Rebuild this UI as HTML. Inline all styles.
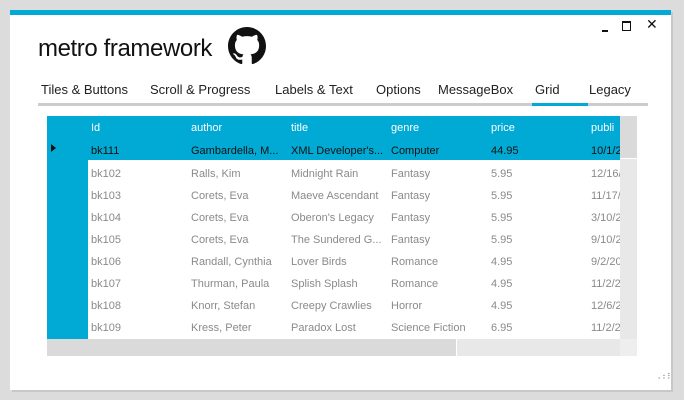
<!DOCTYPE html><html><head><style>
body{margin:0;width:684px;height:400px;background:#dcdcdc;font-family:"Liberation Sans",sans-serif;position:relative;overflow:hidden}
.win{position:absolute;left:10px;top:10px;width:661px;height:380px;background:#fff;box-shadow:2px 2px 0 #c8c8c8}
.top{position:absolute;left:0;top:0;width:661px;height:5px;background:#00aad4}
.a{position:absolute;white-space:nowrap}
.t{font-size:13px;color:#222;top:72px}
.grid{position:absolute;left:37px;top:106px;width:573px;height:223px;background:#00aad4}
.rows{position:absolute;left:41px;top:44px;width:532px;height:179px;background:#fff}
.c{position:absolute;font-size:11px;white-space:nowrap;overflow:hidden}
</style></head><body>
<div class="win">
<div class="top"></div>
<div class="a" style="left:28px;top:25px;font-size:24px;color:#111;letter-spacing:-0.4px">metro framework</div>
<svg class="a" style="left:218px;top:17px" width="38" height="38" viewBox="0 0 16 16"><path fill="#111" d="M8 0C3.58 0 0 3.58 0 8c0 3.54 2.29 6.53 5.47 7.59.4.07.55-.17.55-.38 0-.19-.01-.82-.01-1.49-2.01.37-2.53-.49-2.69-.94-.09-.23-.48-.94-.82-1.13-.28-.15-.68-.52-.01-.53.63-.01 1.08.58 1.23.82.72 1.21 1.87.87 2.33.66.07-.52.28-.87.51-1.07-1.78-.2-3.64-.89-3.64-3.95 0-.87.31-1.59.82-2.15-.08-.2-.36-1.02.08-2.12 0 0 .67-.21 2.2.82.64-.18 1.32-.27 2-.27.68 0 1.36.09 2 .27 1.53-1.04 2.2-.82 2.2-.82.44 1.1.16 1.92.08 2.12.51.56.82 1.27.82 2.15 0 3.07-1.87 3.75-3.65 3.95.29.25.54.73.54 1.48 0 1.07-.01 1.93-.01 2.2 0 .21.15.46.55.38A8.013 8.013 0 0 0 16 8c0-4.42-3.58-8-8-8z"/></svg>
<div class="a" style="left:592px;top:20px;width:6px;height:2px;background:#111"></div>
<div class="a" style="left:612px;top:11px;width:7px;height:7px;border:1.5px solid #111;border-top-width:2px"></div>
<div class="a" style="left:636px;top:6px;font-size:14px;color:#111">✕</div>
<div class="a t" style="left:31px">Tiles &amp; Buttons</div>
<div class="a t" style="left:140px">Scroll &amp; Progress</div>
<div class="a t" style="left:265px">Labels &amp; Text</div>
<div class="a t" style="left:366px">Options</div>
<div class="a t" style="left:428px">MessageBox</div>
<div class="a t" style="left:525px">Grid</div>
<div class="a t" style="left:579px">Legacy</div>
<div class="a" style="left:28px;top:93px;width:610px;height:3px;background:#ccc"></div>
<div class="a" style="left:522px;top:93px;width:56px;height:3px;background:#00aad4"></div>
<div class="grid">
<div class="rows"></div>
<div class="a" style="left:573px;top:0;width:17px;height:42px;background:#dadada"></div>
<div class="a" style="left:573px;top:43px;width:17px;height:180px;background:#e8e8e8"></div>
<div class="a" style="left:0;top:223px;width:409px;height:17px;background:#dadada"></div>
<div class="a" style="left:410px;top:223px;width:163px;height:17px;background:#e8e8e8"></div>
<div class="a" style="left:573px;top:223px;width:17px;height:17px;background:#eee"></div>
<div class="a" style="left:4px;top:28px;width:0;height:0;border-left:5px solid #111;border-top:4px solid transparent;border-bottom:4px solid transparent"></div>
<div id="cells"></div>
</div>
<div class="a" style="left:645px;top:362px;font-size:8px;color:#888;letter-spacing:-1px">⠠⠰⠸</div>
</div>
<script>
var d=[["Id","author","title","genre","price","publi"],["bk111","Gambardella, M...","XML Developer's...","Computer","44.95","10/1/2"],["bk102","Ralls, Kim","Midnight Rain","Fantasy","5.95","12/16/"],["bk103","Corets, Eva","Maeve Ascendant","Fantasy","5.95","11/17/"],["bk104","Corets, Eva","Oberon's Legacy","Fantasy","5.95","3/10/2"],["bk105","Corets, Eva","The Sundered G...","Fantasy","5.95","9/10/2"],["bk106","Randall, Cynthia","Lover Birds","Romance","4.95","9/2/20"],["bk107","Thurman, Paula","Splish Splash","Romance","4.95","11/2/2"],["bk108","Knorr, Stefan","Creepy Crawlies","Horror","4.95","12/6/2"],["bk109","Kress, Peter","Paradox Lost","Science Fiction","6.95","11/2/2"]];
var h="",xs=[44,144,244,344,444,544],ys=[6,29,52,74,96,118,140,162,184,206];
d.forEach(function(r,i){r.forEach(function(v,j){var col=i==0?"#fff":i==1?"#111":"#8a8a8a";var w=j==5?29:100;h+='<div class="c" style="left:'+xs[j]+'px;top:'+ys[i]+'px;color:'+col+';width:'+w+'px">'+v+'</div>';});});
document.getElementById("cells").innerHTML=h;
</script>
</body></html>
